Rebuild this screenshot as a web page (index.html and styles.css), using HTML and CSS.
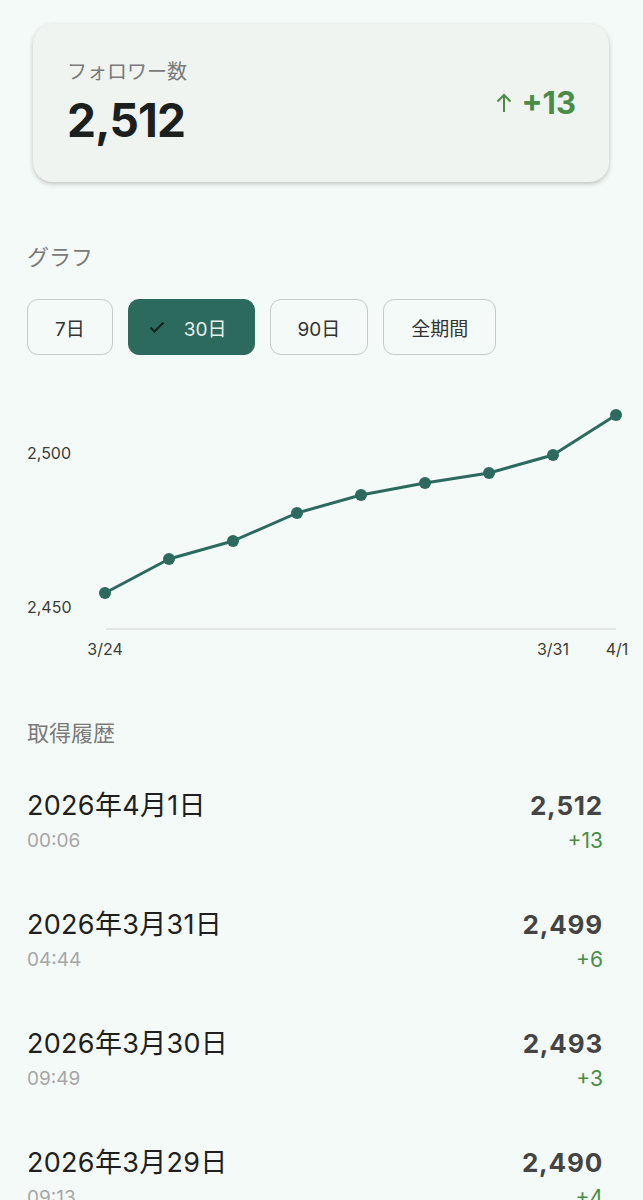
FILE: index.html
```html
<!DOCTYPE html>
<html lang="ja">
<head>
  <meta charset="UTF-8">
  <meta name="viewport" content="width=device-width, initial-scale=1.0">
  <title>フォロワー数</title>
  <link rel="stylesheet" href="styles.css">
</head>
<body>
  <div class="summary">
    <div>
      <div class="summary-label">フォロワー数</div>
      <div class="summary-count">2,512</div>
    </div>
    <div class="summary-diff">
      <svg class="arrow" width="16" height="20" viewBox="0 0 16 20"><path d="M8 19V2M1.5 8.5L8 2l6.5 6.5" fill="none" stroke="currentColor" stroke-width="2"/></svg>
      +13
    </div>
  </div>

  <h2 class="section-title">グラフ</h2>
  <div class="chips">
    <button class="chip">7日</button>
    <button class="chip selected">
      <svg class="check" width="16" height="16" viewBox="0 0 16 16"><path d="M1.5 8.5l4 4 9-9" fill="none" stroke="currentColor" stroke-width="2.2"/></svg>
      30日
    </button>
    <button class="chip">90日</button>
    <button class="chip">全期間</button>
  </div>

  <svg class="chart" width="616" height="300" viewBox="0 0 616 300">
    <text class="axis-label" x="0" y="79">2,500</text>
    <text class="axis-label" x="0" y="233">2,450</text>
    <line x1="79" y1="249" x2="589" y2="249" stroke="#dcdfde" stroke-width="1.5"/>
    <polyline points="78,213 142,179 206,161 270,133 334,115 398,103 462,93 526,75 589,35" fill="none" stroke="#2d6a5e" stroke-width="3" stroke-linejoin="round"/>
    <g fill="#2d6a5e">
      <circle cx="78" cy="213" r="6"/>
      <circle cx="142" cy="179" r="6"/>
      <circle cx="206" cy="161" r="6"/>
      <circle cx="270" cy="133" r="6"/>
      <circle cx="334" cy="115" r="6"/>
      <circle cx="398" cy="103" r="6"/>
      <circle cx="462" cy="93" r="6"/>
      <circle cx="526" cy="75" r="6"/>
      <circle cx="589" cy="35" r="6"/>
    </g>
    <text class="axis-label" x="78" y="275" text-anchor="middle">3/24</text>
    <text class="axis-label" x="526" y="275" text-anchor="middle">3/31</text>
    <text class="axis-label" x="590" y="275" text-anchor="middle">4/1</text>
  </svg>

  <h2 class="section-title history-title">取得履歴</h2>
  <ul class="history">
    <li class="entry">
      <div>
        <div class="entry-date">2026年4月1日</div>
        <div class="entry-time">00:06</div>
      </div>
      <div class="entry-right">
        <div class="entry-count">2,512</div>
        <div class="entry-diff">+13</div>
      </div>
    </li>
    <li class="entry">
      <div>
        <div class="entry-date">2026年3月31日</div>
        <div class="entry-time">04:44</div>
      </div>
      <div class="entry-right">
        <div class="entry-count">2,499</div>
        <div class="entry-diff">+6</div>
      </div>
    </li>
    <li class="entry">
      <div>
        <div class="entry-date">2026年3月30日</div>
        <div class="entry-time">09:49</div>
      </div>
      <div class="entry-right">
        <div class="entry-count">2,493</div>
        <div class="entry-diff">+3</div>
      </div>
    </li>
    <li class="entry">
      <div>
        <div class="entry-date">2026年3月29日</div>
        <div class="entry-time">09:13</div>
      </div>
      <div class="entry-right">
        <div class="entry-count">2,490</div>
        <div class="entry-diff">+4</div>
      </div>
    </li>
  </ul>
</body>
</html>
```

FILE: styles.css
```css
body {
  margin: 0;
  padding: 24px 0 0 27px;
  background-color: #f4faf8;
  color: #222;
  font-family: Inter, "Noto Sans CJK JP", sans-serif;
  overflow: hidden;
}
.summary {
  display: flex;
  align-items: flex-start;
  justify-content: space-between;
  box-sizing: border-box;
  width: 576px;
  height: 158px;
  margin-left: 6px;
  padding: 35px 33px 0 34px;
  background-color: #eff4f1;
  border-radius: 20px;
  box-shadow: 0 2px 5px rgba(0, 0, 0, 0.22);
}
.summary-label {
  font-size: 20px;
  color: #7a7a7a;
  line-height: 26px;
}
.summary-count {
  font-size: 46px;
  font-weight: 700;
  color: #1b1f1d;
  line-height: 56px;
  margin-top: 7px;
  letter-spacing: -0.8px;
}
.summary-diff {
  display: flex;
  align-items: center;
  margin-top: 24px;
  font-size: 31px;
  font-weight: 700;
  color: #4a8c46;
  line-height: 40px;
}
.summary-diff .arrow {
  margin-right: 10px;
}
.section-title {
  margin: 0;
  font-size: 22px;
  font-weight: 400;
  color: #7a7a7a;
  line-height: 30px;
}
.summary + .section-title {
  margin-top: 60px;
}
.chips {
  display: flex;
  gap: 15px;
  margin-top: 27px;
}
.chip {
  display: flex;
  align-items: center;
  justify-content: center;
  height: 56px;
  padding: 0 27px;
  border: 1.5px solid #c6cac8;
  border-radius: 11px;
  background: transparent;
  font-family: inherit;
  font-size: 19px;
  color: #333;
}
.chip.selected {
  background-color: #2d6a5e;
  border-color: #2d6a5e;
  color: #e6efec;
  padding: 0 27px 0 20px;
}
.chip .check {
  color: #14261f;
  margin-right: 19px;
}
.chart {
  display: block;
  margin-top: 25px;
}
.axis-label {
  font-size: 16px;
  fill: #3a3a3a;
}
.history-title {
  margin-top: 38px;
}
.history {
  list-style: none;
  margin: 7px 0 0;
  padding: 0;
  width: 576px;
}
.entry {
  display: flex;
  justify-content: space-between;
  height: 119px;
  padding-top: 34px;
  box-sizing: border-box;
}
.entry-date {
  font-size: 27px;
  color: #1f1f1f;
  line-height: 34px;
  letter-spacing: 0.3px;
}
.entry-time {
  font-size: 19px;
  color: #a6a6a6;
  line-height: 26px;
  margin-top: 5px;
}
.entry-right {
  text-align: right;
}
.entry-count {
  font-size: 26px;
  font-weight: 700;
  color: #444;
  letter-spacing: 0.8px;
  line-height: 34px;
}
.entry-diff {
  font-size: 21px;
  color: #4a8c46;
  line-height: 26px;
  margin-top: 5px;
}
```
